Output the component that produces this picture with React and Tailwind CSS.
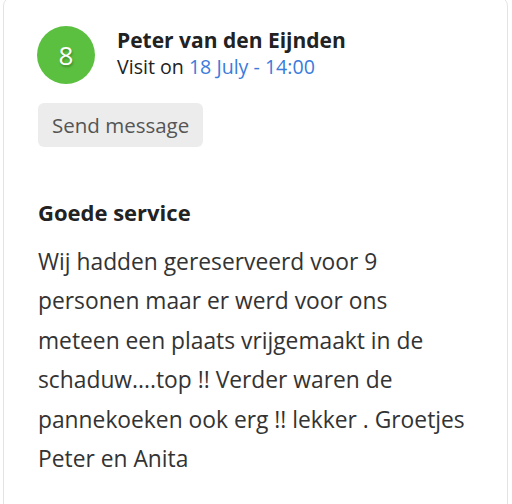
import React from 'react';

export default function App() {
  return (
    <div className="w-[512px] h-[504px] bg-white overflow-hidden font-['Open_Sans',sans-serif] text-[#333]">
      <div className="ml-[3px] mr-[4px] -mt-[4px] h-[520px] border border-[#e4e4e4] rounded-[10px] pl-[33px] pr-[30px] pt-[29px]">
        {/* Header */}
        <div className="flex items-center gap-[22px]">
          <div className="w-[58px] h-[58px] rounded-full bg-[#5bbf3f] flex items-center justify-center text-white text-[26px] [text-shadow:1px_2px_2px_rgba(0,0,0,0.25)]">
            8
          </div>
          <div className="-mt-[5px]">
            <div className="text-[21px] font-bold leading-[28px] text-[#222]">Peter van den Eijnden</div>
            <div className="text-[19.6px] leading-[26px] text-[#222]">
              Visit on <span className="text-[#3a7bdc]">18 July - 14:00</span>
            </div>
          </div>
        </div>

        <button className="mt-[19px] ml-[1px] h-[44px] px-[14px] rounded-[6px] bg-[#ececec] text-[20.5px] text-[#555]">
          Send message
        </button>

        <h3 className="mt-[50px] ml-[1px] text-[22px] font-bold leading-[30px] text-[#222]">Goede service</h3>
        <p className="mt-[15px] ml-[1px] mr-[12px] text-[22.8px] leading-[39.4px] text-[#333]">
          Wij hadden gereserveerd voor 9 personen maar er werd voor ons meteen een plaats vrijgemaakt in de schaduw....top !! Verder waren de pannekoeken ook erg !! lekker . Groetjes Peter en Anita
        </p>
      </div>
    </div>
  );
}
